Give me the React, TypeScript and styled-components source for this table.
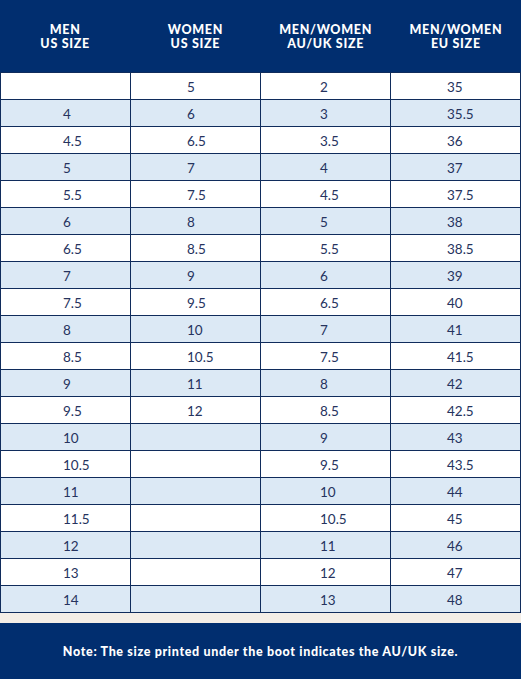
import React from "react";
import styled, { createGlobalStyle } from "styled-components";

const Global = createGlobalStyle`
  html, body { margin: 0; padding: 0; background: #f4eee7; }
  body { font-family: Lato, "Noto Sans", sans-serif; }
`;

const NAVY = "#012e6f";
const LINE = "#102c5c";
const PADS = [62, 56, 59, 56];

const Page = styled.div`
  width: 521px;
  height: 679px;
  display: flex;
  flex-direction: column;
  background: #f4eee7;
  overflow: hidden;
`;

const Header = styled.div`
  height: 72px;
  background: ${NAVY};
  display: grid;
  grid-template-columns: repeat(4, 1fr);
  align-items: center;
`;

const HeadCell = styled.div`
  color: #ffffff;
  font-weight: 900;
  font-size: 12.5px;
  line-height: 14px;
  text-align: center;
  letter-spacing: 0.7px;
  padding-top: 2px;
`;

const Table = styled.div`
  display: grid;
  grid-template-columns: repeat(4, 1fr);
  grid-auto-rows: 26px;
  gap: 1px;
  background: ${LINE};
  border: 1px solid ${LINE};
`;

const Cell = styled.div<{ $alt: boolean; $pad: number }>`
  background: ${(p) => (p.$alt ? "#dce9f5" : "#ffffff")};
  color: #26335e;
  font-size: 13.5px;
  display: flex;
  align-items: center;
  padding-left: ${(p) => p.$pad}px;
  padding-top: 1px;
`;

const Spacer = styled.div`
  height: 10px;
`;

const Footer = styled.div`
  flex: 1;
  background: ${NAVY};
  color: #ffffff;
  font-weight: 900;
  font-size: 12.5px;
  display: flex;
  align-items: center;
  justify-content: center;
  letter-spacing: 0.65px;
`;

const rows: string[][] = [
  ["", "5", "2", "35"],
  ["4", "6", "3", "35.5"],
  ["4.5", "6.5", "3.5", "36"],
  ["5", "7", "4", "37"],
  ["5.5", "7.5", "4.5", "37.5"],
  ["6", "8", "5", "38"],
  ["6.5", "8.5", "5.5", "38.5"],
  ["7", "9", "6", "39"],
  ["7.5", "9.5", "6.5", "40"],
  ["8", "10", "7", "41"],
  ["8.5", "10.5", "7.5", "41.5"],
  ["9", "11", "8", "42"],
  ["9.5", "12", "8.5", "42.5"],
  ["10", "", "9", "43"],
  ["10.5", "", "9.5", "43.5"],
  ["11", "", "10", "44"],
  ["11.5", "", "10.5", "45"],
  ["12", "", "11", "46"],
  ["13", "", "12", "47"],
  ["14", "", "13", "48"],
];

export default function App() {
  return (
    <Page>
      <Global />
      <Header>
        <HeadCell>MEN<br />US SIZE</HeadCell>
        <HeadCell>WOMEN<br />US SIZE</HeadCell>
        <HeadCell>MEN/WOMEN<br />AU/UK SIZE</HeadCell>
        <HeadCell>MEN/WOMEN<br />EU SIZE</HeadCell>
      </Header>
      <Table>
        {rows.map((r, i) =>
          r.map((v, j) => (
            <Cell key={`${i}-${j}`} $alt={i % 2 === 1} $pad={PADS[j]}>
              {v}
            </Cell>
          ))
        )}
      </Table>
      <Spacer />
      <Footer>Note: The size printed under the boot indicates the AU/UK size.</Footer>
    </Page>
  );
}
